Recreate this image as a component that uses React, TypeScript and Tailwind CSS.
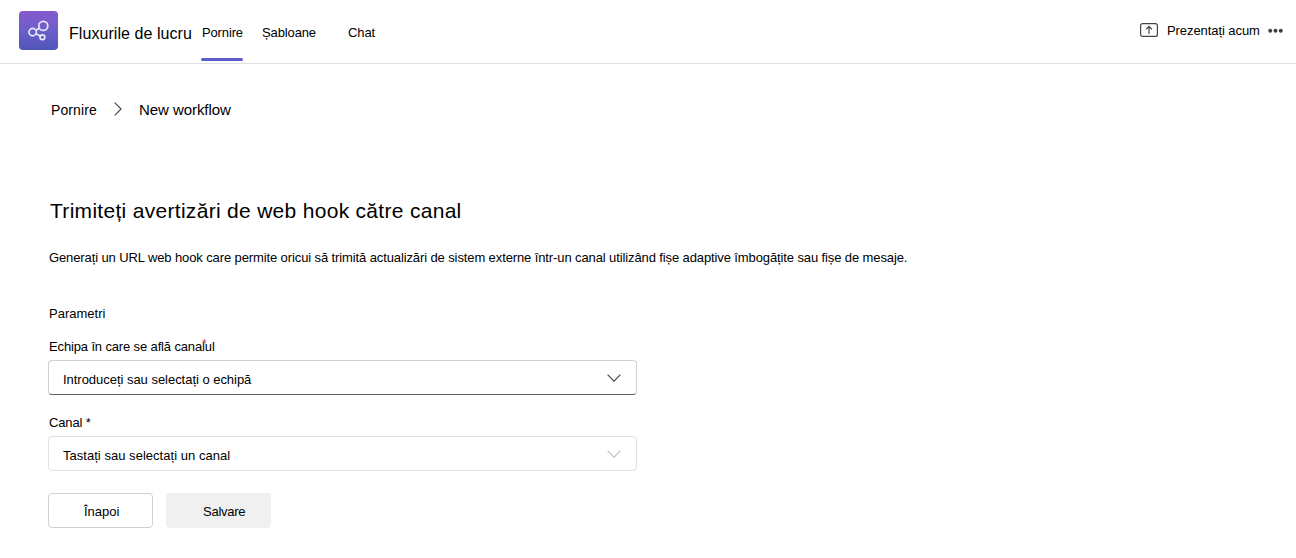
import type { ReactNode } from "react";

function WorkflowLogo() {
  return (
    <div className="ml-[19px] mt-[11px] flex h-[39px] w-[39px] shrink-0 items-center justify-center rounded bg-gradient-to-b from-[#8659cd] via-[#6c5fc9] to-[#4f55b8]">
      <svg width="39" height="39" viewBox="0 0 39 39" fill="none" stroke="#e9e6fa" strokeWidth="1.7">
        <circle cx="24.3" cy="14.9" r="4.5" />
        <circle cx="13.7" cy="21.1" r="3.7" />
        <circle cx="23.4" cy="26.3" r="2.4" />
        <path d="M17 19.3l3.4-2M17 22.8l4.2 2.3" />
      </svg>
    </div>
  );
}

function Chevron({ className }: { className: string }) {
  return (
    <svg className={`mt-px ${className}`} width="14" height="8" viewBox="0 0 14 8" fill="none" stroke="currentColor" strokeWidth="1.1">
      <path d="M0.6 0.7L7 7.1L13.4 0.7" />
    </svg>
  );
}

function Field({ label, mark, box, icon, children }: { label: ReactNode; mark?: boolean; box: string; icon: string; children: ReactNode }) {
  return (
    <div className="h-[76px] w-[589px]">
      <div className="relative h-5 w-fit pl-px leading-5 tracking-[-0.14px]">
        {label}
        {mark && <span className="absolute left-[154px] top-[-3px] text-[12px] text-[#c4314b]">*</span>}
      </div>
      <div className={`mt-[3px] flex h-[35px] items-center justify-between rounded border pl-[14px] pr-[15px] ${box}`}>
        <span className="mt-[5px] leading-5">{children}</span>
        <Chevron className={icon} />
      </div>
    </div>
  );
}

export default function App() {
  return (
    <div className="h-[558px] w-[1296px] overflow-hidden whitespace-nowrap bg-white font-['Liberation_Sans',Arial,sans-serif] text-[13px] text-black">
      <header className="flex h-16 border-b border-[#e0e0e0]">
        <WorkflowLogo />
        <h1 className="ml-[11px] mt-6 w-[132px] text-[16px] leading-5 tracking-[0.06px]">Fluxurile de lucru</h1>
        <nav className="flex pt-[23px]">
          <div className="flex w-[42px] flex-col justify-between pb-[2px]">
            <span className="pl-px leading-5 tracking-[-0.14px]">Pornire</span>
            <span className="h-[3px] rounded-full bg-[#5b5fc7]" />
          </div>
          <span className="ml-[19px] w-[86px] leading-5 tracking-[-0.12px]">Șabloane</span>
          <span className="leading-5 tracking-[-0.1px]">Chat</span>
        </nav>
        <div className="ml-auto flex pt-[21px]">
          <svg className="mt-[2px]" width="18" height="14" viewBox="0 0 18 14" fill="none" stroke="#484644" strokeWidth="1.2">
            <rect x="0.6" y="0.6" width="16.8" height="12.8" rx="2" />
            <path d="M9 11V3.4M6 6.3L9 3.3l3 3" />
          </svg>
          <span className="ml-[9px] w-[101px] leading-5 tracking-[-0.07px]">Prezentați acum</span>
          <svg className="mr-[13px] mt-[7px]" width="15" height="5" viewBox="0 0 15 5" fill="#424242">
            <circle cx="2.2" cy="2.7" r="2" />
            <circle cx="7.5" cy="2.7" r="2" />
            <circle cx="12.8" cy="2.7" r="2" />
          </svg>
        </div>
      </header>
      <main className="pl-12">
        <nav className="flex pl-[3px] pt-9">
          <span className="w-[63px] text-[14px] leading-5 tracking-[0.1px]">Pornire</span>
          <svg className="mt-[2px]" width="8" height="14" viewBox="0 0 8 14" fill="none" stroke="#424242" strokeWidth="1.1">
            <path d="M0.7 0.6L7.1 7L0.7 13.4" />
          </svg>
          <span className="ml-[17px] text-[15px] leading-5 tracking-[-0.06px]">New workflow</span>
        </nav>
        <h2 className="mt-[77px] pl-[2px] text-[21px] leading-7 tracking-[0.3px]">Trimiteți avertizări de web hook către canal</h2>
        <p className="mt-[23px] pl-px leading-5 tracking-[-0.11px]">
          Generați un URL web hook care permite oricui să trimită actualizări de sistem externe într-un canal utilizând fișe adaptive îmbogățite sau fișe de mesaje.
        </p>
        <h3 className="mt-9 pl-px leading-5">Parametri</h3>
        <div className="mt-[13px]">
          <Field label="Echipa în care se află canalul" mark box="border-[#d1d1d1] border-b-[#616161]" icon="text-[#424242]">
            <span className="tracking-[-0.03px]">Introduceți sau selectați o echipă</span>
          </Field>
          <Field label="Canal *" box="border-[#e0e0e0]" icon="text-[#bdbdbd]">
            <span className="tracking-[0.03px]">Tastați sau selectați un canal</span>
          </Field>
        </div>
        <div className="mt-1 flex gap-[13px]">
          <button className="h-[35px] w-[105px] rounded border border-[#d1d1d1] pl-[35px] pt-[2px] text-left">Înapoi</button>
          <button className="h-[35px] w-[105px] rounded bg-[#f0f0f0] pl-[37px] pt-[3px] text-left tracking-[-0.25px]">Salvare</button>
        </div>
      </main>
    </div>
  );
}
